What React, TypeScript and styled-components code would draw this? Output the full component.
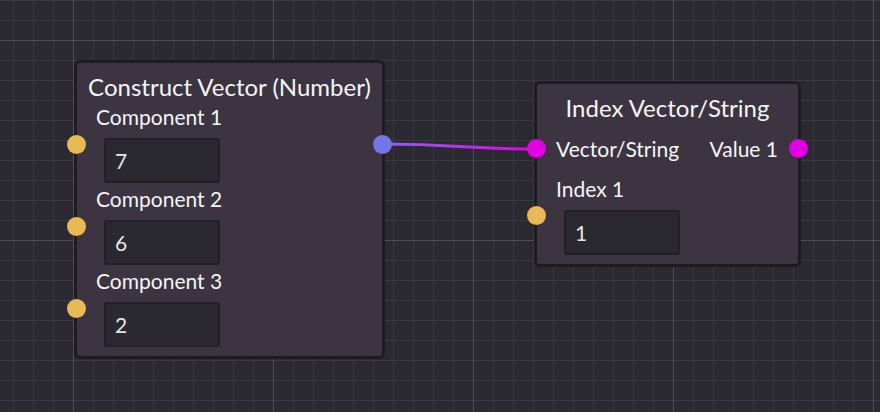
import React from 'react';
import styled, { createGlobalStyle } from 'styled-components';

const Global = createGlobalStyle`
  html, body { margin: 0; padding: 0; background: #2b2a33; }
  body { font-family: Lato, "Noto Sans", sans-serif; }
`;

const Canvas = styled.div`
  position: relative;
  width: 880px;
  height: 412px;
  overflow: hidden;
  background-color: #2b2a33;
  background-image:
    linear-gradient(to right, #4e4d56 1px, transparent 1px),
    linear-gradient(to bottom, #4e4d56 1px, transparent 1px),
    linear-gradient(to right, #393840 1px, transparent 1px),
    linear-gradient(to bottom, #393840 1px, transparent 1px);
  background-size: 200px 200px, 200px 200px, 20px 20px, 20px 20px;
  background-position: 73px 0, 0 40px, 13px 0, 0 0;
`;

const Wires = styled.svg`
  position: absolute;
  left: 0;
  top: 0;
  width: 880px;
  height: 412px;
`;

const Node = styled.div<{ $x: number; $y: number; $w: number }>`
  position: absolute;
  left: ${(p) => p.$x}px;
  top: ${(p) => p.$y}px;
  width: ${(p) => p.$w}px;
  box-sizing: border-box;
  display: flex;
  flex-direction: column;
  padding: 11px 0 9px;
  background: #3c3441;
  border: 3px solid #1e1c22;
  border-radius: 6px;
  color: #f4f4f4;
`;

const Title = styled.div`
  font-size: 24px;
  line-height: 25px;
  text-align: center;
  white-space: nowrap;
`;

const InputRow = styled.div<{ $gap: number }>`
  position: relative;
  display: flex;
  flex-direction: column;
  align-items: flex-start;
  padding-left: 19px;
  margin-top: ${(p) => p.$gap}px;
`;

const IORow = styled.div<{ $gap: number }>`
  position: relative;
  display: flex;
  justify-content: space-between;
  padding: 0 20px 0 19px;
  margin-top: ${(p) => p.$gap}px;
`;

const Label = styled.div`
  font-size: 21px;
  line-height: 24px;
  white-space: nowrap;
`;

const Field = styled.div`
  box-sizing: border-box;
  width: 116px;
  height: 45px;
  margin: 9px 0 0 8px;
  padding-left: 9px;
  display: flex;
  align-items: center;
  background: #2a2830;
  border: 2px solid #232127;
  border-radius: 2px;
  font-size: 21px;
  color: #e6e6e6;
`;

const Port = styled.span<{ $color: string; $side: 'left' | 'right'; $top: number }>`
  position: absolute;
  ${(p) => p.$side}: -10px;
  top: ${(p) => p.$top}px;
  width: 19px;
  height: 19px;
  border-radius: 50%;
  background: ${(p) => p.$color};
`;

const YELLOW = '#e9b955';
const BLUE = '#7474ea';
const MAGENTA = '#e200e2';

export default function App() {
  return (
    <>
      <Global />
      <Canvas>
        <Wires viewBox="0 0 880 412">
          <defs>
            <linearGradient id="wire" x1="382" y1="0" x2="537" y2="0" gradientUnits="userSpaceOnUse">
              <stop offset="0" stopColor="#8f62f2" />
              <stop offset="1" stopColor="#e400e6" />
            </linearGradient>
          </defs>
          <path d="M382 144 C 459 144, 460 149, 537 149" fill="none" stroke="url(#wire)" strokeWidth="3" />
        </Wires>

        <Node $x={74} $y={60} $w={311}>
          <Title>Construct Vector (Number)</Title>
          <InputRow $gap={6}>
            <Port $color={YELLOW} $side="left" $top={30} />
            <Port $color={BLUE} $side="right" $top={30} />
            <Label>Component 1</Label>
            <Field>7</Field>
          </InputRow>
          <InputRow $gap={4}>
            <Port $color={YELLOW} $side="left" $top={30} />
            <Label>Component 2</Label>
            <Field>6</Field>
          </InputRow>
          <InputRow $gap={4}>
            <Port $color={YELLOW} $side="left" $top={30} />
            <Label>Component 3</Label>
            <Field>2</Field>
          </InputRow>
        </Node>

        <Node $x={534} $y={81} $w={267}>
          <Title>Index Vector/String</Title>
          <IORow $gap={17}>
            <Port $color={MAGENTA} $side="left" $top={2} />
            <Label>Vector/String</Label>
            <Label>Value 1</Label>
            <Port $color={MAGENTA} $side="right" $top={2} />
          </IORow>
          <InputRow $gap={16}>
            <Port $color={YELLOW} $side="left" $top={29} />
            <Label>Index 1</Label>
            <Field>1</Field>
          </InputRow>
        </Node>
      </Canvas>
    </>
  );
}
